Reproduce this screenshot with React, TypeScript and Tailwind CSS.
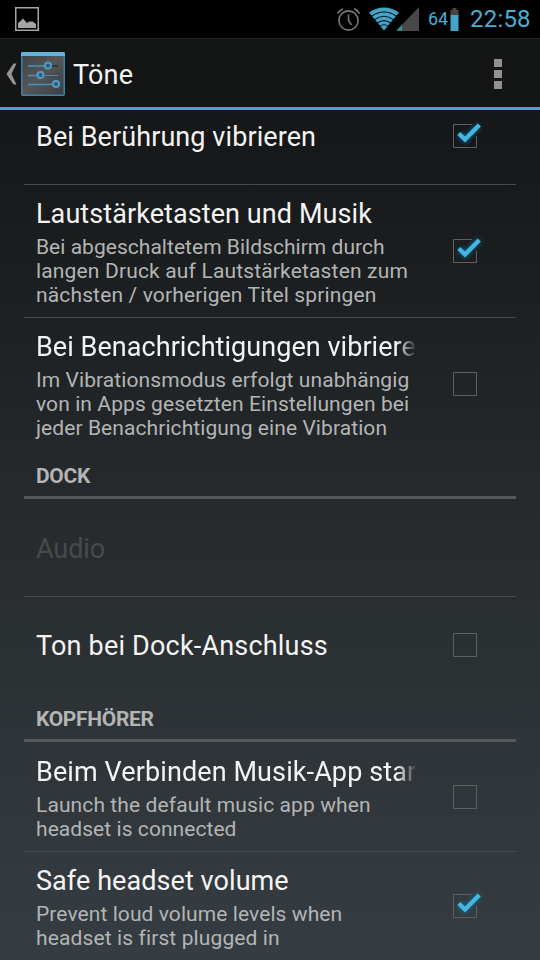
import type { ReactNode } from "react";

function StatusBar() {
  return (
    <header className="flex h-[38px] shrink-0 items-center bg-black pr-[9px] pl-[15px] text-[#4aaed3]">
      <svg width="24" height="24" viewBox="0 0 24 24">
        <rect x="0.75" y="0.75" width="22.5" height="22.5" fill="none" stroke="#a5a5a5" strokeWidth="1.5" />
        <path d="M3 21V16L5 14.500L8 11.500L12 16L14 14.500H17.500L21 17V21Z" fill="#a5a5a5" />
      </svg>
      <div className="ml-auto flex items-center">
        <svg width="24" height="24" viewBox="0 0 24 24" fill="none" stroke="#777777" strokeWidth="1.6">
          <circle cx="12.500" cy="13.500" r="9.600" />
          <path d="M12.500 7.500v6l3 4.500M1.500 6.500Q3.500 3 7 1.800M23.500 6.500Q21.500 3 18 1.800" />
        </svg>
        <svg className="ml-2" width="52" height="24" viewBox="0 0 52 24">
          <path d="M1 5.500Q16 -4.500 31 5.500L16 23.500Z" fill="#43a5ca" />
          <path d="M3.500 9.300Q16 0.800 28.500 9.300M6.500 12.700Q16 5.800 25.500 12.700M9.500 16Q16 11.200 22.500 16M12 19.200Q16 16.200 20 19.200" fill="none" stroke="#001018" strokeWidth="1.100" />
          <path d="M28 24L51 0V24Z" fill="#484848" />
          <path d="M28.500 23.500L34 18V23.500Z" fill="#2d9a9f" />
        </svg>
        <span className="ml-[8px] w-[20px] text-[18px] leading-6">64</span>
        <svg className="ml-[2px]" width="9" height="24" viewBox="0 0 9 24">
          <path d="M2.500 1H6.500V3H8.500V9H0.500V3H2.500Z" fill="#4b4540" />
          <path d="M0.500 8H8.500V24H0.500Z" fill="#43a5ca" />
        </svg>
        <span className="ml-[11px] w-[61px] text-[24px] leading-6 tracking-[0.2px] whitespace-nowrap">22:58</span>
      </div>
    </header>
  );
}

function ActionBar() {
  return (
    <div className="flex h-[72px] shrink-0 items-center border-t border-b-3 border-t-[#222424] border-b-[#48a5c9] bg-[#141616] pt-[2px] pr-[38px] pl-[6px]">
      <svg width="11" height="24" viewBox="0 0 11 24">
        <path d="M7.500 1.500H10.500L5.500 12L10.500 22.500H7.500L0.500 12Z" fill="#949494" />
      </svg>
      <svg className="ml-[4px]" width="44" height="44" viewBox="0 0 44 44">
        <defs>
          <linearGradient id="tile" x1="0" y1="0" x2="1" y2="1">
            <stop offset="0" stopColor="#3c4245" />
            <stop offset=".5" stopColor="#555656" />
            <stop offset="1" stopColor="#383e42" />
          </linearGradient>
        </defs>
        <rect x=".75" y=".75" width="42.500" height="42.500" rx="1" fill="url(#tile)" stroke="#3d82aa" strokeWidth="1.500" />
        <path d="M0 4V1.500Q0 0 1.500 0H42.500Q44 0 44 1.500V4Z" fill="#62b2dc" />
        <path d="M7 14H27M7 23.500H20M7 32.500H35" stroke="#4792bb" strokeWidth="1.600" />
        <path d="M27 14H37M20 23.500H37" stroke="#252c30" strokeWidth="1.600" />
        <path d="M23 23.500H37" stroke="#4792bb" strokeWidth="1" />
        <g fill="#285b80" stroke="#539bc2" strokeWidth="2">
          <circle cx="27" cy="13.500" r="3" />
          <circle cx="19.500" cy="23" r="3" />
          <circle cx="35" cy="32" r="3" />
        </g>
      </svg>
      <h1 className="ml-[8px] pt-[2px] text-[27px] leading-8 tracking-[0.2px] text-[#f3f3f3]">Töne</h1>
      <div className="ml-auto flex flex-col gap-[3px]">
        <i className="size-2 bg-[#929292]" />
        <i className="size-2 bg-[#929292]" />
        <i className="size-2 bg-[#929292]" />
      </div>
    </div>
  );
}

function Checkbox({ checked }: { checked: boolean }) {
  return (
    <svg className="shrink-0 overflow-visible" width="24" height="24" viewBox="0 0 24 24">
      <path
        d={checked ? "M19 .5H.5V23.500H23.500V12" : "M.5 .5H23.500V23.500H.5Z"}
        fill="none"
        stroke="#5c6061"
      />
      {checked && (
        <g fill="none">
          <path className="blur-[2px]" d="M6 10L12 15.500L26 1" stroke="#087baa" strokeWidth="6" opacity=".65" />
          <path d="M5.800 9.500L12 15.500L26.300 1" stroke="#45b5e2" strokeWidth="4.300" />
        </g>
      )}
    </svg>
  );
}

interface Line {
  text: string;
  tracking: string;
}

interface RowProps {
  height: string;
  title: string;
  tracking: string;
  lines?: Line[];
  checked?: boolean;
  disabled?: boolean;
  fade?: boolean;
  last?: boolean;
}

function Row({ height, title, lines = [], checked, disabled, fade, last, tracking }: RowProps) {
  return (
    <div className={`flex shrink-0 items-center pr-[39px] pl-3 ${height} ${last ? "" : "border-b border-[#464a4b]"}`}>
      <div className="w-[379px] pt-[2px]">
        <div
          className={`overflow-hidden text-[27px] leading-[34px] whitespace-nowrap ${tracking} ${lines.length ? "mb-1" : ""} ${disabled ? "text-[#47494a]" : "text-[#f3f3f3]"} ${fade ? "mask-r-from-[361px] mask-r-to-[381px]" : ""}`}
        >
          {title}
        </div>
        {lines.map(({ text, tracking: spacing }) => (
          <p key={text} className={`text-[21px] leading-6 whitespace-nowrap text-[#b3b5b5] ${spacing}`}>
            {text}
          </p>
        ))}
      </div>
      {checked !== undefined && (
        <div className="ml-auto flex">
          <Checkbox checked={checked} />
        </div>
      )}
    </div>
  );
}

function Section({ tracking, children }: { tracking: string; children: ReactNode }) {
  return (
    <h2 className={`flex h-[49px] shrink-0 items-end border-b-3 border-[#54585a] pb-2 pl-3 text-[21px] leading-6 font-bold text-[#b3b5b5] ${tracking}`}>
      {children}
    </h2>
  );
}

export default function App() {
  return (
    <div className="flex h-[960px] w-[540px] flex-col overflow-hidden bg-linear-to-b from-[#101112] via-[#25292b] to-[#363d42] font-[Roboto,sans-serif]">
      <StatusBar />
      <ActionBar />
      <main className="flex min-h-0 flex-1 flex-col px-6">
        <Row height="h-[75px] pb-[22px]" title="Bei Berührung vibrieren" tracking="tracking-[0.08px]" checked />
        <Row
          height="h-[133px]"
          title="Lautstärketasten und Musik"
          tracking="tracking-[0.08px]"
          lines={[
            { text: "Bei abgeschaltetem Bildschirm durch", tracking: "tracking-[0.03px]" },
            { text: "langen Druck auf Lautstärketasten zum", tracking: "tracking-[0.16px]" },
            { text: "nächsten / vorherigen Titel springen", tracking: "tracking-[0.14px]" },
          ]}
          checked
        />
        <Row
          height="h-[132px]"
          title="Bei Benachrichtigungen vibrieren"
          tracking="tracking-[0.05px]"
          lines={[
            { text: "Im Vibrationsmodus erfolgt unabhängig", tracking: "tracking-[0.08px]" },
            { text: "von in Apps gesetzten Einstellungen bei", tracking: "tracking-[0.09px]" },
            { text: "jeder Benachrichtigung eine Vibration", tracking: "tracking-[0.08px]" },
          ]}
          checked={false}
          fade
          last
        />
        <Section tracking="tracking-[-0.3px]">DOCK</Section>
        <Row height="h-[98px]" title="Audio" tracking="tracking-[-0.1px]" disabled />
        <Row height="h-[96px]" title="Ton bei Dock-Anschluss" tracking="tracking-[0.19px]" checked={false} last />
        <Section tracking="tracking-[-0.33px]">KOPFHÖRER</Section>
        <Row
          height="h-[110px]"
          title="Beim Verbinden Musik-App starten"
          tracking="tracking-[0.1px]"
          lines={[
            { text: "Launch the default music app when", tracking: "tracking-[0.1px]" },
            { text: "headset is connected", tracking: "tracking-[0.06px]" },
          ]}
          checked={false}
          fade
        />
        <Row
          height="h-[108px]"
          title="Safe headset volume"
          tracking="tracking-[0.07px]"
          lines={[
            { text: "Prevent loud volume levels when", tracking: "tracking-[0.08px]" },
            { text: "headset is first plugged in", tracking: "tracking-[0.12px]" },
          ]}
          checked
          last
        />
      </main>
    </div>
  );
}
